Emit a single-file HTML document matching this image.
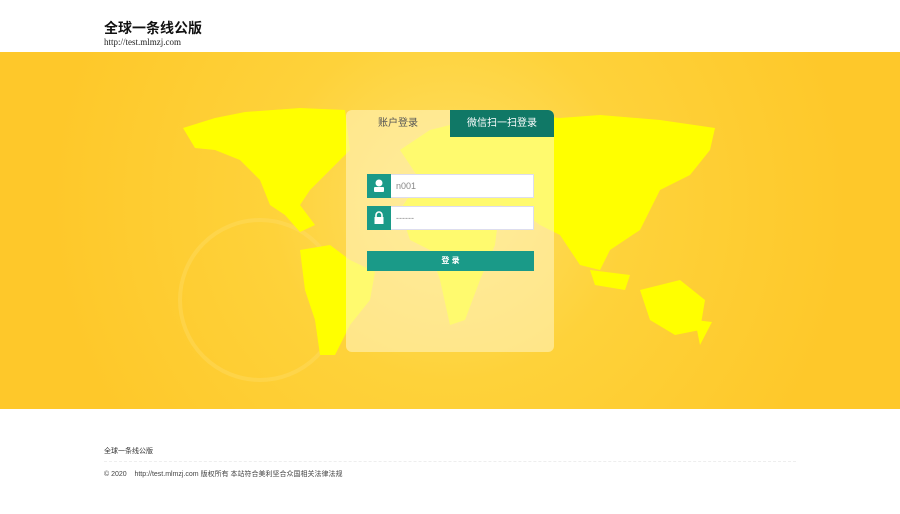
<!DOCTYPE html>
<html><head><meta charset="utf-8"><style>
*{margin:0;padding:0;box-sizing:border-box}
body{width:900px;height:514px;background:#fff;font-family:"Liberation Sans","Noto Sans CJK SC",sans-serif;position:relative;overflow:hidden}
.t1{position:absolute;left:104px;top:18px;font-size:14px;font-weight:bold;color:#111}
.t2{position:absolute;left:104px;top:37px;font-size:9px;color:#222;font-family:"Liberation Serif","Noto Sans CJK SC",serif}
.band{position:absolute;left:0;top:52px;width:900px;height:357px;background:radial-gradient(circle at 450px 150px,#ffe066 0,#fed23a 180px,#fec82a 400px)}
svg.map{position:absolute;left:0;top:0}
.card{position:absolute;left:346px;top:110px;width:208px;height:242px;border-radius:6px;background:rgba(255,245,200,.55);overflow:hidden}
.tab1{position:absolute;left:0;top:0;width:104px;height:27px;text-align:center;line-height:27px;font-size:10px;color:#555}
.tab2{position:absolute;left:104px;top:0;width:104px;height:27px;background:#107866;color:#fff;text-align:center;line-height:27px;font-size:10px}
.row{position:absolute;left:21px;width:167px;height:24px;background:#fff;border:1px solid #dde}
.ic{position:absolute;left:-1px;top:-1px;width:24px;height:24px;background:#1a9a88}
.row span{position:absolute;left:28px;top:6px;font-size:9px;color:#888}
.btn{position:absolute;left:21px;top:141px;width:167px;height:20px;background:#1a9a88;color:#fff;font-size:8px;text-align:center;line-height:20px;font-weight:bold}
.f1{position:absolute;left:104px;top:446px;font-size:7px;color:#333}
.hr{position:absolute;left:104px;top:461px;width:692px;border-top:1px dashed #eee}
.f2{position:absolute;left:104px;top:469px;font-size:7px;color:#444}
</style></head><body>
<div class="t1">全球一条线公版</div>
<div class="t2">http://test.mlmzj.com</div>
<div class="band"></div>
<svg class="map" width="900" height="514" fill="#ffff00">
<circle cx="260" cy="300" r="80" fill="none" stroke="#ffe070" stroke-width="4" opacity=".35"/>
<polygon points="183,128 215,118 245,112 300,108 345,110 350,150 330,170 310,190 300,205 315,225 300,232 285,215 270,205 260,180 240,160 215,150 195,148"/>
<polygon points="300,250 330,245 350,260 375,272 370,300 350,325 335,355 320,355 315,320 305,290"/>
<polygon points="400,150 430,130 470,120 520,115 560,118 600,115 660,120 715,128 710,150 690,175 660,190 640,230 610,250 600,270 580,265 560,235 540,225 520,210 500,205 495,245 480,280 465,320 450,325 440,280 430,250 410,240 400,210 420,180"/>
<polygon points="640,290 680,280 705,300 700,330 675,335 650,320"/>
<polygon points="695,320 712,322 700,345"/>
<polygon points="590,270 630,275 625,290 595,285"/>
</svg>
<div class="card">
<div class="tab1">账户登录</div><div class="tab2">微信扫一扫登录</div>
<div class="row" style="top:64px"><div class="ic"><svg width="24" height="24"><circle cx="12" cy="9" r="3.5" fill="#fff"/><rect x="7" y="13" width="10" height="5" rx="1" fill="#fff"/></svg></div><span>n001</span></div>
<div class="row" style="top:96px"><div class="ic"><svg width="24" height="24"><path d="M9 11V9a3 3 0 0 1 6 0v2" stroke="#fff" stroke-width="1.6" fill="none"/><rect x="7.5" y="11" width="9" height="7" fill="#fff"/></svg></div><span>------</span></div>
<div class="btn">登 录</div>
</div>
<div class="f1">全球一条线公版</div>
<div class="hr"></div>
<div class="f2">© 2020 &nbsp;&nbsp; http://test.mlmzj.com 版权所有 本站符合美利坚合众国相关法律法规</div>
</body></html>
